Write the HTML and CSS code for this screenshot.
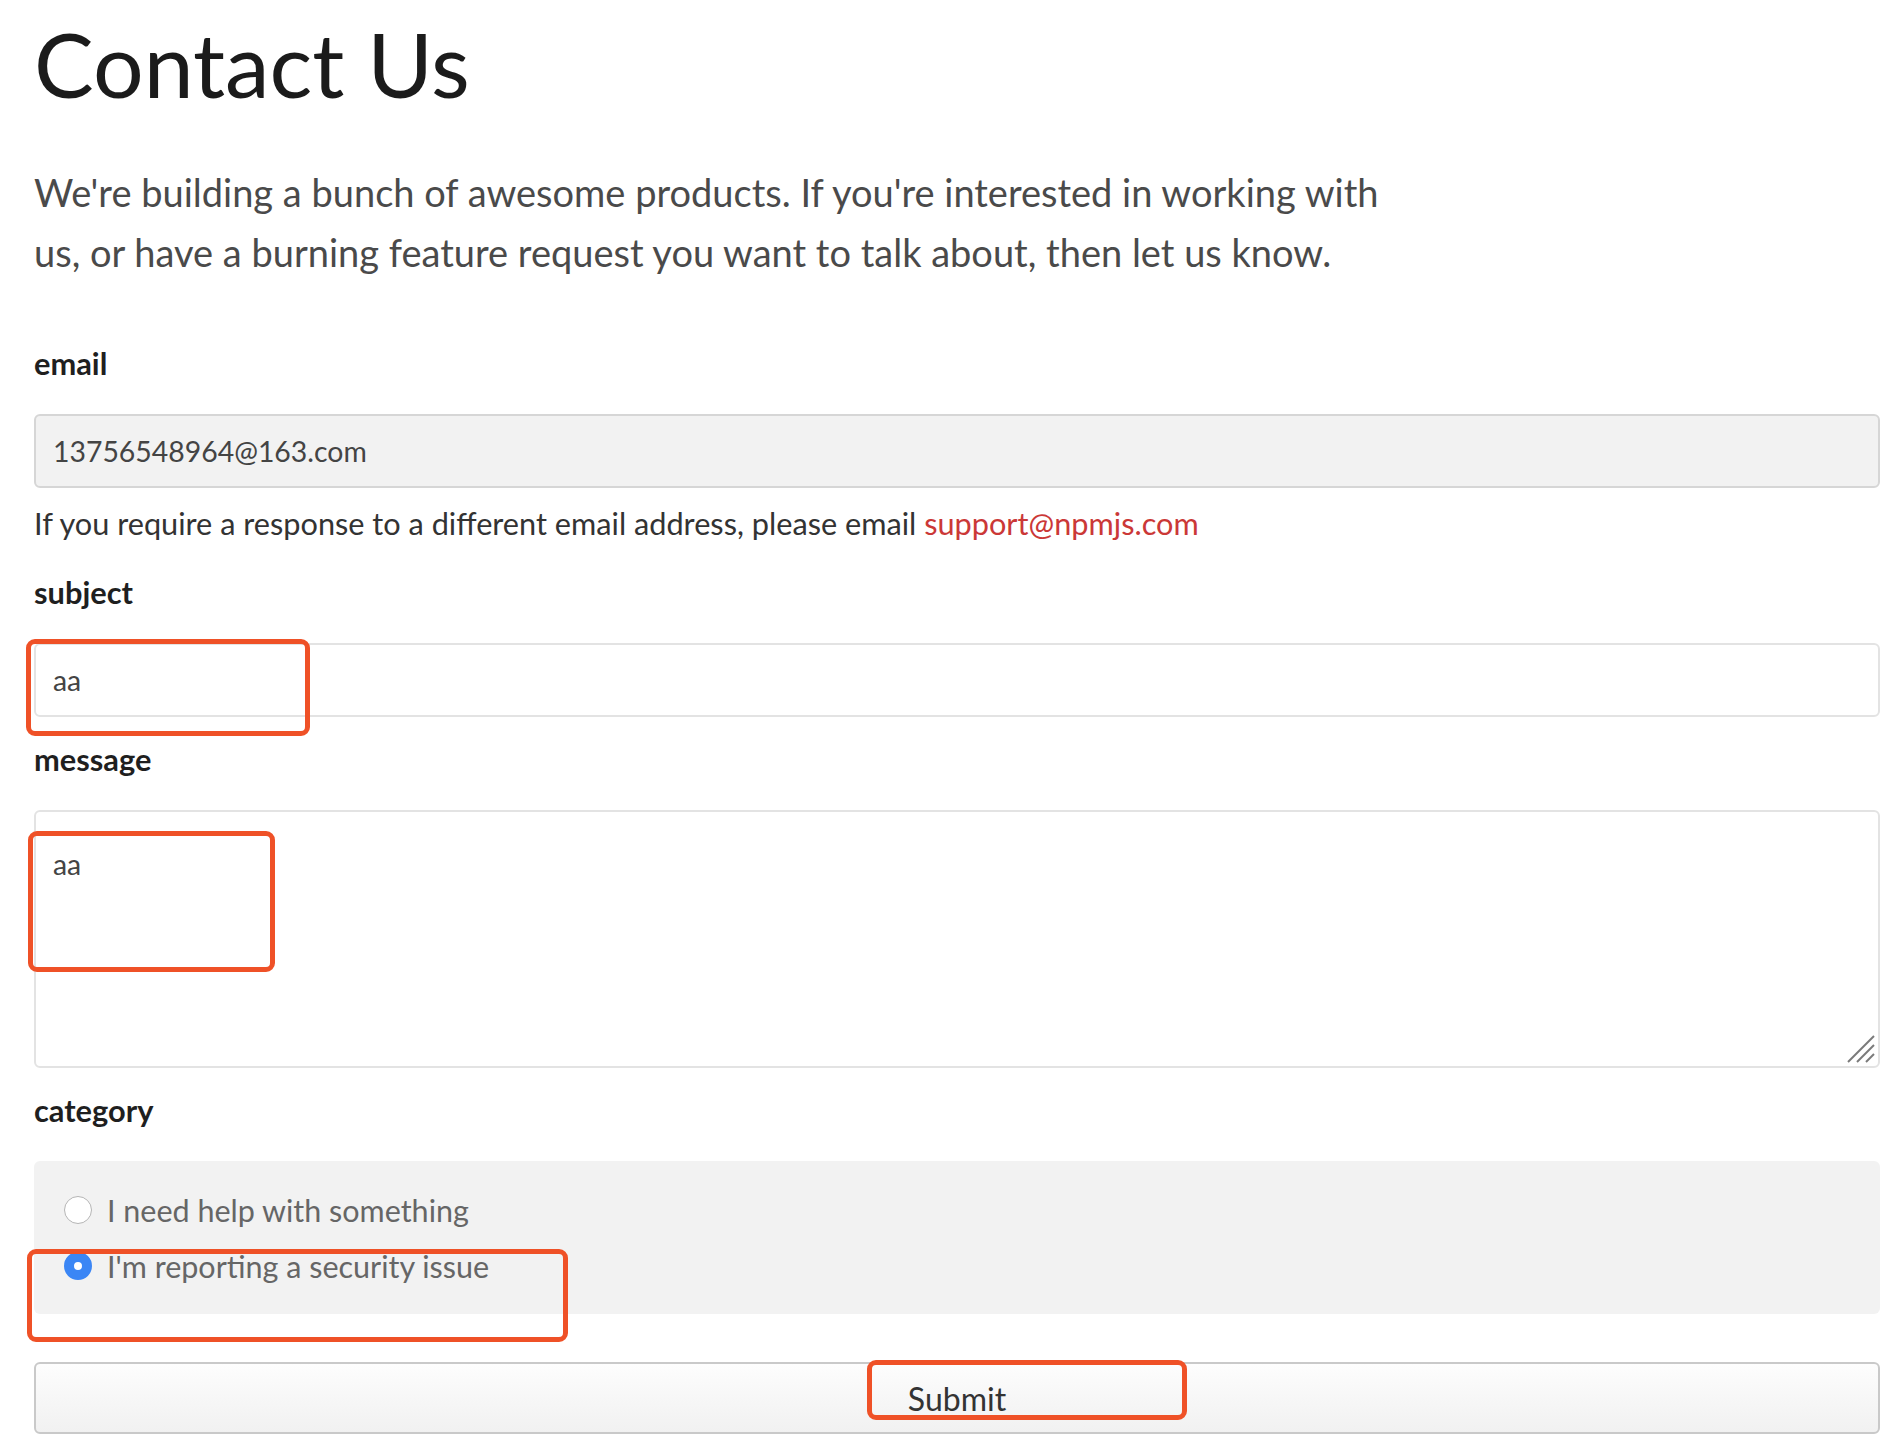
FILE: index.html
```html
<!DOCTYPE html>
<html lang="en">
<head>
<meta charset="utf-8">
<title>Contact Us</title>
<link rel="stylesheet" href="styles.css">
</head>
<body>
<main class="page">
  <h1 class="title">Contact Us</h1>
  <p class="intro">We're building a bunch of awesome products. If you're interested in working with us, or have a burning feature request you want to talk about, then let us know.</p>

  <form class="form">
    <label class="label" for="email">email</label>
    <input class="field field-disabled" id="email" type="text" value="13756548964@163.com" readonly>
    <p class="help">If you require a response to a different email address, please email <a class="link" href="#">support@npmjs.com</a></p>

    <label class="label" for="subject">subject</label>
    <input class="field field-subject" id="subject" type="text" value="aa">

    <label class="label" for="message">message</label>
    <div class="textarea-wrap">
      <textarea class="field field-message" id="message">aa</textarea>
      <svg class="grip" width="28" height="28" viewBox="0 0 28 28" aria-hidden="true">
        <line x1="1" y1="27" x2="27" y2="1" />
        <line x1="10" y1="27" x2="27" y2="10" />
        <line x1="19" y1="27" x2="27" y2="19" />
      </svg>
    </div>

    <div class="label">category</div>
    <div class="radio-group">
      <label class="option"><input class="radio" type="radio" name="category"><span>I need help with something</span></label>
      <label class="option"><input class="radio" type="radio" name="category" checked><span>I'm reporting a security issue</span></label>
    </div>

    <button class="submit" type="button">Submit</button>

    <div class="mark mark-subject"></div>
    <div class="mark mark-message"></div>
    <div class="mark mark-category"></div>
    <div class="mark mark-submit"></div>
  </form>
</main>
</body>
</html>
```

FILE: styles.css
```css
* { box-sizing: border-box; }

html, body {
  margin: 0;
  padding: 0;
  background: #ffffff;
}

body {
  font-family: Lato, "Open Sans", sans-serif;
  color: #333333;
}

.page {
  padding: 0 14px 40px 34px;
}

.title {
  margin: 9px 0 0 0;
  font-size: 89.5px;
  line-height: 110px;
  font-weight: 400;
  color: #1b1b1b;
}

.intro {
  margin: 43px 0 0 0;
  max-width: 1385px;
  font-size: 38px;
  line-height: 60px;
  color: #4a4a4a;
}

.form {
  position: relative;
  margin-top: 62px;
  display: flex;
  flex-direction: column;
}

.label {
  display: block;
  font-size: 30.8px;
  line-height: 40px;
  font-weight: 700;
  color: #1f1f1f;
  margin-bottom: 30px;
}

.field {
  display: block;
  width: 100%;
  height: 74px;
  padding: 0 17px;
  border: 2px solid #e3e3e3;
  border-radius: 6px;
  background: #ffffff;
  font-family: Lato, "Open Sans", sans-serif;
  font-size: 28.4px;
  color: #444444;
  outline: none;
}

.field-disabled {
  background: #f2f2f2;
  border-color: #d6d6d6;
}

.help {
  margin: 16px 0 29px 0;
  font-size: 30.7px;
  line-height: 40px;
  color: #333333;
}

.link {
  color: #cb3837;
  text-decoration: none;
}

.field-subject {
  margin-bottom: 23px;
}

.textarea-wrap {
  position: relative;
  margin-bottom: 23px;
}

.field-message {
  height: 258px;
  padding-top: 32px;
  line-height: 40px;
  resize: none;
}

.grip {
  position: absolute;
  right: 5px;
  bottom: 5px;
  stroke: #7a7a7a;
  stroke-width: 2;
}

.radio-group {
  background: #f2f2f2;
  border-radius: 6px;
  padding: 21px 30px 20px 30px;
  display: flex;
  flex-direction: column;
  margin-bottom: 48px;
}

.option {
  display: flex;
  align-items: center;
  gap: 15px;
  height: 56px;
  font-size: 30.5px;
  color: #666666;
}

.radio {
  appearance: none;
  -webkit-appearance: none;
  margin: 0;
  width: 28px;
  height: 28px;
  border-radius: 50%;
  border: 1.5px solid #b5b5b5;
  background: #ffffff;
  flex: none;
}

.radio:checked {
  border: 10px solid #3b86f5;
  background: #ffffff;
}

.submit {
  display: block;
  width: 100%;
  height: 72px;
  border: 2px solid #c9c9c9;
  border-radius: 6px;
  background: linear-gradient(#fdfdfd, #f1f1f1);
  font-family: Lato, "Open Sans", sans-serif;
  font-size: 32px;
  color: #333333;
  padding: 0;
}

.mark {
  position: absolute;
  border: 5px solid #ef5127;
  border-radius: 9px;
  pointer-events: none;
}

.mark-subject {
  left: -8px;
  top: 295px;
  width: 284px;
  height: 97px;
}

.mark-message {
  left: -6px;
  top: 487px;
  width: 247px;
  height: 141px;
}

.mark-category {
  left: -7px;
  top: 905px;
  width: 541px;
  height: 93px;
}

.mark-submit {
  left: 833px;
  top: 1016px;
  width: 320px;
  height: 60px;
}
```
